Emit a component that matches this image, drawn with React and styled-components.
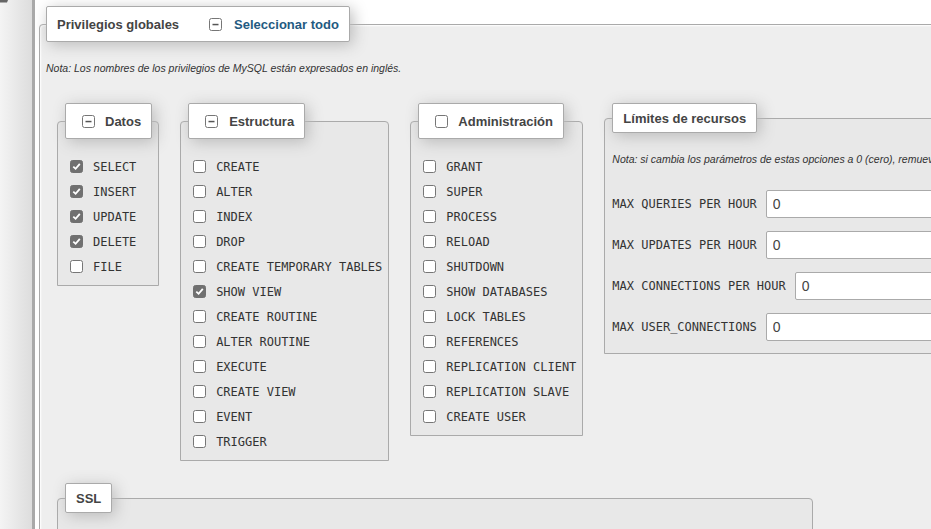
import styled, { createGlobalStyle } from "styled-components";

const GlobalStyle = createGlobalStyle`
  html, body {
    margin: 0;
    background: #fff;
    overflow: hidden;
  }

  body {
    font-family: "Liberation Sans", Arial, sans-serif;
    font-size: 13px;
    color: #444;
  }
`;

const Page = styled.div`
  display: flex;
  height: 529px;
`;

const Sidebar = styled.aside`
  width: 32px;
  flex: none;
  background: linear-gradient(to right, #f4f4f4, #dddddd);
`;

const SidebarIcon = styled.svg`
  display: block;
`;

const Resizer = styled.div`
  width: 3px;
  flex: none;
  background: #a9a9a9;
`;

const Main = styled.main`
  flex: none;
  padding: 6px 0 0 4px;
`;

const Outer = styled.fieldset`
  width: 1100px;
  min-width: 0;
  margin: 0;
  padding: 0 7px 40px 6px;
  border: 1px solid #aaa;
  border-radius: 4px 4px 0 0;
  background: #eee;
  box-shadow: inset 1px 1px 2px #fff;
`;

const Legend = styled.legend`
  box-sizing: border-box;
  display: flex;
  align-items: center;
  height: ${(p) => (p.$tall ? 36 : 30)}px;
  padding: 0 10px;
  background: #fff;
  border: 1px solid #aaa;
  border-radius: 2px;
  box-shadow: 3px 3px 15px #bbb;
  font-size: 13px;
  font-weight: bold;
  color: #444;
  white-space: nowrap;
`;

const SelectAll = styled.span`
  display: flex;
  align-items: center;
  gap: 12px;
  margin-left: 30px;
  color: #235a81;
`;

const LegendToggle = styled.span`
  display: flex;
  align-items: center;
  gap: ${(p) => p.$gap || 11}px;
  padding-left: 6px;
`;

const Note = styled.div`
  margin-top: 20px;
  font-size: 10.5px;
  line-height: 12px;
  font-style: italic;
  color: #333;
  white-space: nowrap;
`;

const Groups = styled.div`
  display: flex;
  align-items: flex-start;
  gap: 21px;
  margin: 29px 0 0 11px;
`;

const Group = styled.fieldset`
  flex: none;
  align-self: flex-start;
  min-width: 0;
  margin: 0;
  padding: 0 6px ${(p) => p.$bottom || 6}px 7px;
  border: 1px solid #aaa;
  border-radius: 4px 4px 0 0;
  background: #e8e8e8;
`;

const List = styled.div`
  padding-top: 15px;
`;

const Row = styled.label`
  display: flex;
  align-items: center;
  gap: 10px;
  height: 25px;
  padding-left: 5px;
  font-family: "DejaVu Sans Mono", "Liberation Mono", monospace;
  font-size: 12px;
  color: #333;
  white-space: nowrap;
`;

const Box = styled.span`
  box-sizing: border-box;
  display: inline-flex;
  align-items: center;
  justify-content: center;
  width: 13px;
  height: 13px;
  flex: none;
  border: 1px solid ${(p) => (p.$checked ? "#707070" : "#767676")};
  border-radius: 2.5px;
  background: ${(p) => (p.$checked ? "#707070" : "#fff")};
`;

const Limits = styled.div`
  margin-top: 25px;
`;

const LimitRow = styled.div`
  display: flex;
  align-items: center;
  gap: 9px;
  height: 28px;

  & + & {
    margin-top: 13px;
  }
`;

const LimitLabel = styled.span`
  font-family: "DejaVu Sans Mono", "Liberation Mono", monospace;
  font-size: 12px;
  color: #333;
  white-space: nowrap;
`;

const NumberInput = styled.input`
  display: block;
  box-sizing: border-box;
  width: 220px;
  height: 28px;
  margin: 0;
  padding: 0 6px;
  border: 1px solid #aaa;
  border-radius: 2px;
  background: #fff;
  font-family: "Liberation Sans", Arial, sans-serif;
  font-size: 14px;
  color: #444;
`;

const SslGroup = styled(Group)`
  display: block;
  width: 756px;
  box-sizing: border-box;
  min-height: 80px;
  margin: 22px 0 0 11px;
`;

const Check = () => (
  <svg width="9" height="9" viewBox="0 0 9 9">
    <path d="M1.3 4.6 L3.6 6.8 L7.8 1.8" fill="none" stroke="#fff" strokeWidth="1.8" />
  </svg>
);

const Dash = () => (
  <svg width="7" height="7" viewBox="0 0 7 7">
    <rect x="0.5" y="2.8" width="6" height="1.5" fill="#555" />
  </svg>
);

const CheckBox = ({ checked }) => <Box $checked={checked}>{checked && <Check />}</Box>;

const datos = [
  ["SELECT", true],
  ["INSERT", true],
  ["UPDATE", true],
  ["DELETE", true],
  ["FILE", false],
];

const estructura = [
  ["CREATE", false],
  ["ALTER", false],
  ["INDEX", false],
  ["DROP", false],
  ["CREATE TEMPORARY TABLES", false],
  ["SHOW VIEW", true],
  ["CREATE ROUTINE", false],
  ["ALTER ROUTINE", false],
  ["EXECUTE", false],
  ["CREATE VIEW", false],
  ["EVENT", false],
  ["TRIGGER", false],
];

const administracion = [
  "GRANT",
  "SUPER",
  "PROCESS",
  "RELOAD",
  "SHUTDOWN",
  "SHOW DATABASES",
  "LOCK TABLES",
  "REFERENCES",
  "REPLICATION CLIENT",
  "REPLICATION SLAVE",
  "CREATE USER",
].map((name) => [name, false]);

const limits = [
  "MAX QUERIES PER HOUR",
  "MAX UPDATES PER HOUR",
  "MAX CONNECTIONS PER HOUR",
  "MAX USER_CONNECTIONS",
];

const PrivilegeList = ({ items }) => (
  <List>
    {items.map(([name, checked]) => (
      <Row key={name}>
        <CheckBox checked={checked} />
        {name}
      </Row>
    ))}
  </List>
);

const App = () => {
  return (
    <>
      <GlobalStyle />
      <Page>
        <Sidebar>
          <SidebarIcon width="10" height="4" viewBox="0 0 10 4">
            <path d="M0 0 H8 L7 2.5 H0 Z" fill="#666" />
          </SidebarIcon>
        </Sidebar>
        <Resizer />
        <Main>
          <Outer>
            <Legend $tall>
              Privilegios globales
              <SelectAll>
                <Box>
                  <Dash />
                </Box>
                Seleccionar todo
              </SelectAll>
            </Legend>
            <Note>Nota: Los nombres de los privilegios de MySQL están expresados en inglés.</Note>

            <Groups>
              <Group>
                <Legend $tall>
                  <LegendToggle $gap={10}>
                    <Box>
                      <Dash />
                    </Box>
                    Datos
                  </LegendToggle>
                </Legend>
                <PrivilegeList items={datos} />
              </Group>

              <Group>
                <Legend $tall>
                  <LegendToggle>
                    <Box>
                      <Dash />
                    </Box>
                    Estructura
                  </LegendToggle>
                </Legend>
                <PrivilegeList items={estructura} />
              </Group>

              <Group>
                <Legend $tall>
                  <LegendToggle $gap={10}>
                    <CheckBox />
                    Administración
                  </LegendToggle>
                </Legend>
                <PrivilegeList items={administracion} />
              </Group>

              <Group $bottom={12}>
                <Legend>Límites de recursos</Legend>
                <Note>
                  Nota: si cambia los parámetros de estas opciones a 0 (cero), remueve el límite.
                </Note>
                <Limits>
                  {limits.map((name) => (
                    <LimitRow key={name}>
                      <LimitLabel>{name}</LimitLabel>
                      <NumberInput type="text" defaultValue="0" />
                    </LimitRow>
                  ))}
                </Limits>
              </Group>
            </Groups>

            <SslGroup>
              <Legend>SSL</Legend>
            </SslGroup>
          </Outer>
        </Main>
      </Page>
    </>
  );
};

export default App;
